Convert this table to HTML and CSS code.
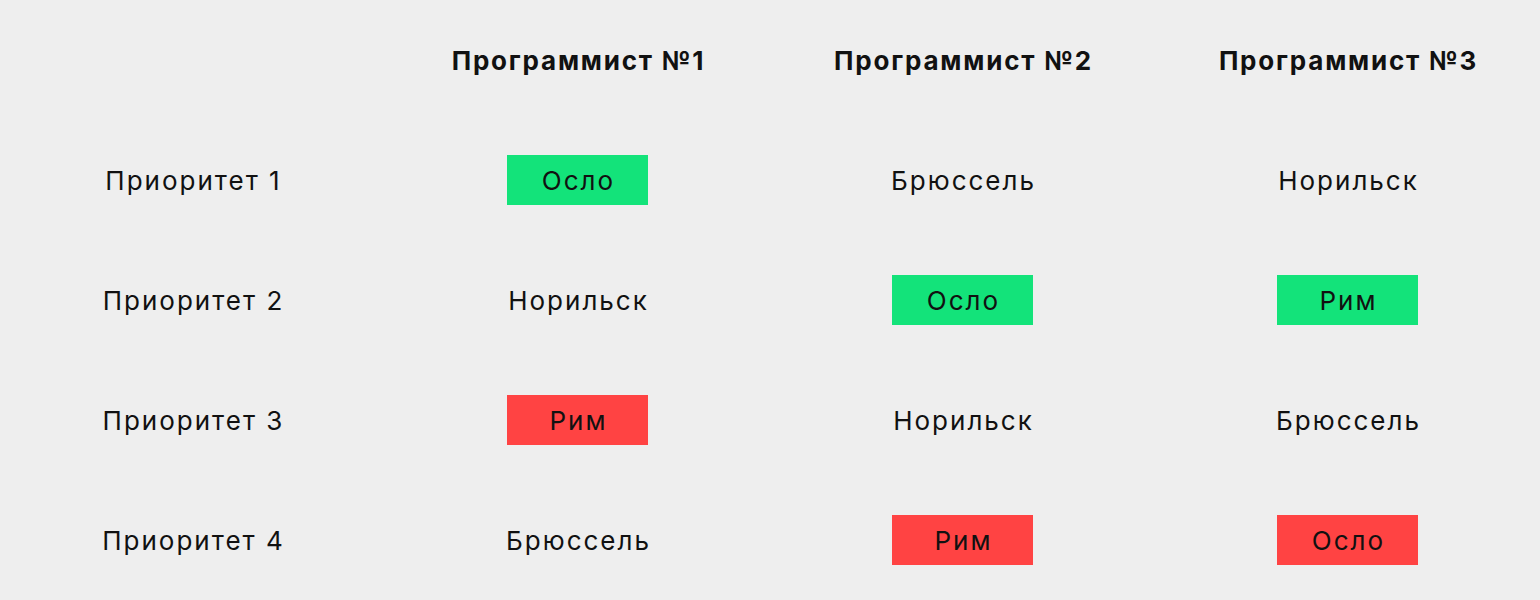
FILE: index.html
```html
<!DOCTYPE html>
<html lang="ru">
<head>
<meta charset="utf-8">
<link rel="stylesheet" href="styles.css">
</head>
<body>
<div class="table">
  <div class="cell"></div>
  <div class="cell head">Программист №1</div>
  <div class="cell head">Программист №2</div>
  <div class="cell head">Программист №3</div>

  <div class="cell">Приоритет 1</div>
  <div class="cell"><span class="tag green">Осло</span></div>
  <div class="cell">Брюссель</div>
  <div class="cell">Норильск</div>

  <div class="cell">Приоритет 2</div>
  <div class="cell">Норильск</div>
  <div class="cell"><span class="tag green">Осло</span></div>
  <div class="cell"><span class="tag green">Рим</span></div>

  <div class="cell">Приоритет 3</div>
  <div class="cell"><span class="tag red">Рим</span></div>
  <div class="cell">Норильск</div>
  <div class="cell">Брюссель</div>

  <div class="cell">Приоритет 4</div>
  <div class="cell">Брюссель</div>
  <div class="cell"><span class="tag red">Рим</span></div>
  <div class="cell"><span class="tag red">Осло</span></div>
</div>
</body>
</html>
```
FILE: styles.css
```css
html, body {
  margin: 0;
  padding: 0;
  background: #eeeeee;
}
body {
  font-family: "Inter", "Roboto", "Liberation Sans", sans-serif;
  color: #111111;
}
.table {
  display: grid;
  grid-template-columns: repeat(4, 1fr);
  grid-auto-rows: 120px;
  width: 1540px;
}
.cell {
  display: flex;
  align-items: center;
  justify-content: center;
  font-size: 26px;
  font-weight: 400;
  letter-spacing: 2px;
  padding-left: 2px;
}
.head {
  font-weight: 700;
  letter-spacing: 1.8px;
}
.tag {
  display: flex;
  align-items: center;
  justify-content: center;
  width: 141px;
  height: 50px;
  margin-left: -2px;
  padding-left: 2px;
  box-sizing: border-box;
}
.green {
  background: #13e37a;
}
.red {
  background: #ff4343;
}
```
